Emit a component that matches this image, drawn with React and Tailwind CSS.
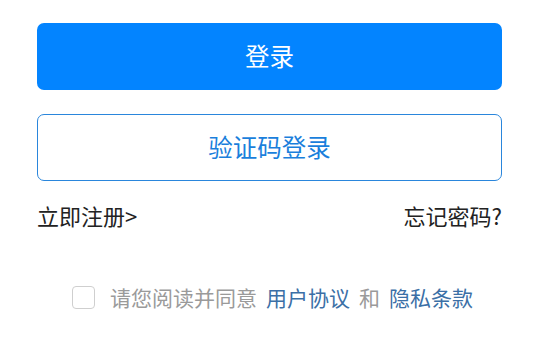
export default function App() {
  return (
    <div className="w-[539px] h-[341px] bg-white px-[37px] pt-[23px] font-['Noto_Sans_CJK_SC','Noto_Sans',sans-serif]">
      <button className="w-full h-[67px] rounded-[7px] bg-[#0384ff] text-white text-[24.5px] flex items-center justify-center">
        登录
      </button>
      <button className="w-full h-[67px] mt-[24px] rounded-[7px] border border-[#2a86dc] bg-white text-[#1a7fdc] text-[24.5px] flex items-center justify-center">
        验证码登录
      </button>
      <div className="flex justify-between items-center mt-[19px] text-[22px] text-[#222] leading-[30px]">
        <span>立即注册&gt;</span>
        <span>忘记密码?</span>
      </div>
      <div className="flex items-center pl-[35px] mt-[53px] text-[21px] leading-[28px]">
        <span className="w-[23px] h-[23px] rounded-[4px] border border-[#cfcfcf] bg-white mr-[15px]" />
        <span className="text-[#9a9a9a]">请您阅读并同意</span>
        <span className="text-[#3b6fa6] ml-[9px]">用户协议</span>
        <span className="text-[#9a9a9a] ml-[9px]">和</span>
        <span className="text-[#3b6fa6] ml-[9px]">隐私条款</span>
      </div>
    </div>
  )
}
